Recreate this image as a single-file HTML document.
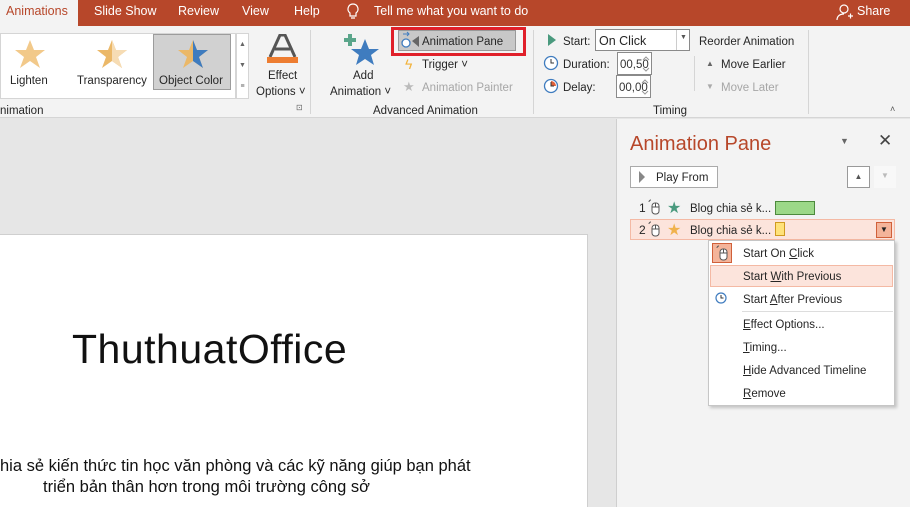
<!DOCTYPE html>
<html><head><meta charset="utf-8"><style>
*{margin:0;padding:0;box-sizing:border-box}
body{width:910px;height:507px;overflow:hidden;position:relative;font-family:"Liberation Sans",sans-serif;font-size:12px;color:#262626;background:#e6e6e6}
.a{position:absolute;white-space:nowrap}
.u{text-decoration:underline}
.s{font-size:11.5px;margin-top:1.5px}
</style></head><body>
<svg width="0" height="0" style="position:absolute"><defs><symbol id="m" viewBox="0 0 14 16"><path d="M4 1a2 2 0 0 0-2 2" fill="none" stroke="#555"/><rect x="5" y="4" width="7" height="11" rx="3" fill="#fff" stroke="#555"/><path d="M8.5 4v4M5 8h7" stroke="#555"/></symbol></defs></svg>
<!-- title bar -->
<div class="a" style="left:0;top:0;width:910px;height:26px;background:#b7472a"></div>
<div class="a" style="left:0;top:0;width:78px;height:26px;background:#f3f3f3"></div>
<div class="a" style="left:6px;top:4px;font-size:12.5px;color:#b7472a">Animations</div>
<div class="a" style="left:94px;top:4px;font-size:12.5px;color:#fff">Slide Show</div>
<div class="a" style="left:178px;top:4px;font-size:12.5px;color:#fff">Review</div>
<div class="a" style="left:242px;top:4px;font-size:12.5px;color:#fff">View</div>
<div class="a" style="left:294px;top:4px;font-size:12.5px;color:#fff">Help</div>
<svg class="a" style="left:346px;top:3px" width="14" height="18"><path d="M7 1a5 5 0 0 0-3 9v3h6v-3a5 5 0 0 0-3-9zM5 15h4" fill="none" stroke="#fff" stroke-width="1.2"/></svg>
<div class="a" style="left:374px;top:4px;font-size:12.5px;color:#fff">Tell me what you want to do</div>
<svg class="a" style="left:836px;top:3px" width="18" height="18"><circle cx="8" cy="6" r="4" fill="none" stroke="#fff" stroke-width="1.2"/><path d="M1 17c0-4 3-6 7-6M12 13h5M14.5 10.5v5" fill="none" stroke="#fff" stroke-width="1.2"/></svg>
<div class="a" style="left:857px;top:4px;font-size:12.5px;color:#fff">Share</div>
<!-- ribbon -->
<div class="a" style="left:0;top:26px;width:910px;height:92px;background:#f3f3f3;border-bottom:1px solid #d5d5d5"></div>
<div class="a" style="left:0;top:33px;width:236px;height:66px;background:#fff;border:1px solid #d5d5d5"></div>
<div class="a" style="left:153px;top:34px;width:78px;height:56px;background:#d1d1d1;border:1px solid #9c9c9c"></div>
<svg class="a" style="left:14px;top:39px" width="32" height="30"><polygon points="16,1 20,11 31,11 22,18 26,29 16,22 6,29 10,18 1,11 12,11" fill="#f2c98a"/></svg>
<svg class="a" style="left:96px;top:39px" width="32" height="30"><polygon points="16,1 20,11 31,11 22,18 26,29 16,22 6,29 10,18 1,11 12,11" fill="#ebb868"/><polygon points="16,1 20,11 31,11 22,18 26,29 16,22" fill="#f6dcb4"/></svg>
<svg class="a" style="left:177px;top:39px" width="32" height="30"><polygon points="16,1 20,11 31,11 22,18 26,29 16,22 6,29 10,18 1,11 12,11" fill="#ebb868"/><polygon points="16,1 20,11 31,11 22,18 26,29 16,22" fill="#3f7cbf"/></svg>
<div class="a s" style="left:10px;top:73px">Lighten</div>
<div class="a s" style="left:77px;top:73px">Transparency</div>
<div class="a s" style="left:159px;top:73px">Object Color</div>
<div class="a" style="left:236px;top:33px;width:13px;height:66px;border:1px solid #d5d5d5;background:#fff;font-size:7px;color:#666;text-align:center;line-height:21px">▲<br>▼<br>≡</div>
<svg class="a" style="left:268px;top:34px" width="30" height="24"><path d="M2 23L12 1h5l10 22M7 15h15" fill="none" stroke="#555" stroke-width="3"/></svg>
<div class="a" style="left:267px;top:57px;width:31px;height:6px;background:#ed7d31"></div>
<div class="a s" style="left:268px;top:68px">Effect</div>
<div class="a s" style="left:256px;top:84px">Options ˅</div>
<div class="a s" style="left:0;top:103px">nimation</div>
<div class="a" style="left:296px;top:103px;font-size:8px;color:#666">⊡</div>
<div class="a" style="left:310px;top:30px;width:1px;height:84px;background:#d5d5d5"></div>
<svg class="a" style="left:344px;top:32px" width="36" height="34"><path d="M6 2v12M0 8h12" stroke="#5aa58a" stroke-width="4"/><polygon points="21,7 25,17 35,17 27,23 30,33 21,27 12,33 15,23 7,17 17,17" fill="#3f7cbf"/></svg>
<div class="a s" style="left:353px;top:68px">Add</div>
<div class="a s" style="left:330px;top:84px">Animation ˅</div>
<div class="a" style="left:391px;top:27px;width:135px;height:29px;border:3px solid #e0202a"></div>
<div class="a" style="left:398px;top:30px;width:118px;height:21px;background:#c8c8c8;border:1px solid #999"></div>
<svg class="a" style="left:401px;top:31px" width="20" height="18"><path d="M2 3h6M6 1l2 2-2 2" stroke="#3f7cbf" fill="none"/><circle cx="5" cy="12" r="4" fill="#fff" stroke="#3f7cbf" stroke-width="1.3"/><polygon points="11,10 18,5 18,16" fill="#666"/></svg>
<div class="a s" style="left:422px;top:34px">Animation Pane</div>
<div class="a" style="left:405px;top:56px;color:#f2b23a;font-size:14px">ϟ</div>
<div class="a s" style="left:422px;top:57px">Trigger ˅</div>
<div class="a" style="left:403px;top:79px;color:#bbb;font-size:13px">★</div>
<div class="a s" style="left:422px;top:80px;color:#a6a6a6">Animation Painter</div>
<div class="a s" style="left:373px;top:103px">Advanced Animation</div>
<div class="a" style="left:533px;top:30px;width:1px;height:84px;background:#d5d5d5"></div>
<svg class="a" style="left:547px;top:34px" width="10" height="12"><polygon points="1,0 9,6 1,12" fill="#4a9a7e"/></svg>
<div class="a s" style="left:563px;top:34px">Start:</div>
<div class="a" style="left:595px;top:29px;width:95px;height:22px;background:#fff;border:1px solid #8a8a8a"></div>
<div class="a" style="left:676px;top:30px;width:1px;height:20px;background:#ccc"></div>
<div class="a" style="left:599px;top:34px;font-size:12.5px">On Click</div>
<div class="a" style="left:680px;top:34px;font-size:7px;color:#555">▼</div>
<svg class="a" style="left:543px;top:55px" width="16" height="16"><circle cx="8" cy="8" r="6.5" fill="#fff" stroke="#3f7cbf" stroke-width="1.3"/><path d="M8 4v4h3" stroke="#333" fill="none"/></svg>
<div class="a s" style="left:563px;top:57px">Duration:</div>
<div class="a" style="left:617px;top:52px;width:35px;height:23px;background:#fff;border:1px solid #8a8a8a"></div>
<div class="a s" style="left:620px;top:57px;color:#333">00,50</div>
<svg class="a" style="left:642px;top:55px" width="8" height="18"><path d="M1 5l3-3 3 3M1 13l3 3 3-3" fill="none" stroke="#999"/></svg>
<svg class="a" style="left:543px;top:78px" width="16" height="16"><circle cx="8" cy="8" r="6.5" fill="#fff" stroke="#3f7cbf" stroke-width="1.3"/><path d="M8 8V3A5 5 0 0 1 13 8z" fill="#e0603a"/><path d="M8 4v4h3" stroke="#333" fill="none"/></svg>
<div class="a s" style="left:563px;top:80px">Delay:</div>
<div class="a" style="left:616px;top:75px;width:35px;height:23px;background:#fff;border:1px solid #8a8a8a"></div>
<div class="a s" style="left:619px;top:80px;color:#333">00,00</div>
<svg class="a" style="left:641px;top:78px" width="8" height="18"><path d="M1 5l3-3 3 3M1 13l3 3 3-3" fill="none" stroke="#999"/></svg>
<div class="a" style="left:694px;top:56px;width:1px;height:35px;background:#d5d5d5"></div>
<div class="a s" style="left:699px;top:34px">Reorder Animation</div>
<div class="a" style="left:706px;top:59px;font-size:8px;color:#666">▲</div>
<div class="a s" style="left:721px;top:57px">Move Earlier</div>
<div class="a" style="left:706px;top:82px;font-size:8px;color:#aaa">▼</div>
<div class="a s" style="left:721px;top:80px;color:#a6a6a6">Move Later</div>
<div class="a s" style="left:653px;top:103px">Timing</div>
<div class="a" style="left:808px;top:30px;width:1px;height:84px;background:#d5d5d5"></div>
<div class="a" style="left:890px;top:104px;font-size:9px;color:#555">˄</div>
<!-- slide -->
<div class="a" style="left:0;top:234px;width:588px;height:273px;background:#fff;border-right:1px solid #cfcfcf;border-top:1px solid #cfcfcf"></div>
<div class="a" style="left:72px;top:326px;font-size:41px;color:#111;letter-spacing:0.5px">ThuthuatOffice</div>
<div class="a" style="left:0;top:457px;font-size:16.5px;color:#111">hia sẻ kiến thức tin học văn phòng và các kỹ năng giúp bạn phát</div>
<div class="a" style="left:43px;top:478px;font-size:16.5px;color:#111">triển bản thân hơn trong môi trường công sở</div>
<!-- pane -->
<div class="a" style="left:616px;top:119px;width:294px;height:388px;background:#f3f3f3;border-left:1px solid #cfcfcf"></div>
<div class="a" style="left:630px;top:133px;font-size:20px;color:#b7472a">Animation Pane</div>
<div class="a" style="left:840px;top:136px;font-size:9px;color:#666">▼</div>
<div class="a" style="left:878px;top:131px;font-size:17px;color:#444">✕</div>
<div class="a" style="left:630px;top:166px;width:88px;height:22px;background:#fff;border:1px solid #aaa"></div>
<svg class="a" style="left:638px;top:171px" width="8" height="12"><polygon points="1,0 7,6 1,12" fill="#888"/></svg>
<div class="a s" style="left:656px;top:170px">Play From</div>
<div class="a" style="left:847px;top:166px;width:23px;height:22px;background:#fff;border:1px solid #999;font-size:8px;color:#555;text-align:center;line-height:20px">▲</div>
<div class="a" style="left:874px;top:166px;width:22px;height:22px;background:#f8f8f8;font-size:8px;color:#bbb;text-align:center;line-height:20px">▼</div>
<div class="a" style="left:639px;top:201px">1</div>
<svg class="a" style="left:647px;top:199px" width="14" height="16"><use href="#m"/></svg>
<div class="a" style="left:667px;top:198px;font-size:16px;color:#4a9a7e">★</div>
<div class="a s" style="left:690px;top:201px">Blog chia sẻ k...</div>
<div class="a" style="left:775px;top:201px;width:40px;height:14px;background:#9cd888;border:1px solid #4d8a3d"></div>
<div class="a" style="left:630px;top:219px;width:265px;height:21px;background:#fce4dc;border:1px solid #f4b9a4"></div>
<div class="a" style="left:639px;top:223px">2</div>
<svg class="a" style="left:647px;top:221px" width="14" height="16"><use href="#m"/></svg>
<div class="a" style="left:667px;top:220px;font-size:16px;color:#f0b24c">★</div>
<div class="a s" style="left:690px;top:223px">Blog chia sẻ k...</div>
<div class="a" style="left:775px;top:222px;width:10px;height:14px;background:#ffe27a;border:1px solid #d09a20"></div>
<div class="a" style="left:876px;top:222px;width:16px;height:16px;background:#f4b49a;border:1px solid #d0603a;font-size:8px;text-align:center;line-height:14px;color:#222">▼</div>
<!-- menu -->
<div class="a" style="left:708px;top:240px;width:187px;height:166px;background:#fff;border:1px solid #c6c6c6;box-shadow:2px 2px 3px rgba(0,0,0,.2)"></div>
<div class="a" style="left:712px;top:243px;width:20px;height:20px;background:#f4b49a;border:1px solid #d0603a"></div>
<svg class="a" style="left:715px;top:245px" width="14" height="16"><use href="#m"/></svg>
<div class="a s" style="left:743px;top:246px">Start On <span class="u">C</span>lick</div>
<div class="a" style="left:710px;top:265px;width:183px;height:22px;background:#fce4dc;border:1px solid #f4b9a4"></div>
<div class="a s" style="left:743px;top:269px">Start <span class="u">W</span>ith Previous</div>
<svg class="a" style="left:715px;top:292px" width="12" height="12"><circle cx="6" cy="6" r="5" fill="#fff" stroke="#3f7cbf" stroke-width="1.2"/><path d="M6 3v3h2.5" stroke="#333" fill="none"/></svg>
<div class="a s" style="left:743px;top:292px">Start <span class="u">A</span>fter Previous</div>
<div class="a" style="left:742px;top:311px;width:151px;height:1px;background:#ddd"></div>
<div class="a s" style="left:743px;top:317px"><span class="u">E</span>ffect Options...</div>
<div class="a s" style="left:743px;top:340px"><span class="u">T</span>iming...</div>
<div class="a s" style="left:743px;top:363px"><span class="u">H</span>ide Advanced Timeline</div>
<div class="a s" style="left:743px;top:386px"><span class="u">R</span>emove</div>
</body></html>
